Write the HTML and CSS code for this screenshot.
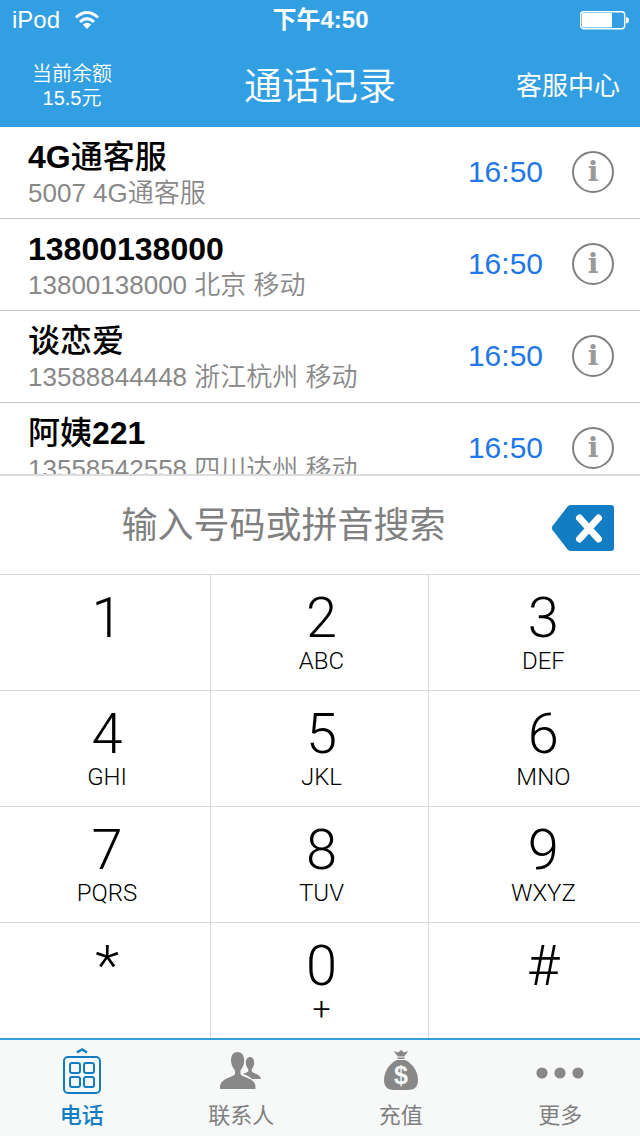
FILE: index.html
```html
<!DOCTYPE html>
<html lang="zh-CN">
<head>
    <meta charset="UTF-8">
    <meta name="viewport" content="width=device-width, initial-scale=1.0">
    <title>通话记录</title>
    <link rel="stylesheet" href="styles.css">
</head>
<body>

    <!-- Status bar -->
    <div class="status-bar">
        <div class="carrier">
            <span>iPod</span>
            <svg width="26" height="20" viewBox="0 0 26 20" fill="none" stroke="#fff" stroke-width="3">
                <path d="M2 7.500Q13 -2.500 24 7.500"/>
                <path d="M6 11.800Q13 5.500 20 11.800"/>
                <path d="M8.800 14.500Q13 11 17.200 14.500L13 19z" fill="#fff" stroke="none"/>
            </svg>
        </div>
        <div class="clock">下午4:50</div>
        <svg class="battery" width="49" height="20" viewBox="0 0 49 20">
            <rect x="0.700" y="1.700" width="44" height="17" rx="3" fill="none" stroke="#fff" stroke-width="1.400"/>
            <rect x="2" y="3" width="30" height="14.500" rx="1" fill="#fff"/>
            <path d="M46 7q3 .500 3 3.200t-3 3.200z" fill="#fff"/>
        </svg>
    </div>

    <!-- Header -->
    <header class="header">
        <div class="balance">当前余额<br>15.5元</div>
        <h1>通话记录</h1>
        <a class="service" href="#service">客服中心</a>
    </header>

    <!-- Call log -->
    <ul class="calls">
        <li class="call">
            <div class="who"><div class="name">4G<span>通客服</span></div><div class="detail">5007 4G通客服</div></div>
            <time>16:50</time>
            <button class="info" aria-label="详情">i</button>
        </li>
        <li class="call">
            <div class="who"><div class="name">13800138000</div><div class="detail">13800138000 北京 移动</div></div>
            <time>16:50</time>
            <button class="info" aria-label="详情">i</button>
        </li>
        <li class="call">
            <div class="who"><div class="name"><span>谈恋爱</span></div><div class="detail">13588844448 浙江杭州 移动</div></div>
            <time>16:50</time>
            <button class="info" aria-label="详情">i</button>
        </li>
        <li class="call">
            <div class="who"><div class="name"><span>阿姨</span>221</div><div class="detail">13558542558 四川达州 移动</div></div>
            <time>16:50</time>
            <button class="info" aria-label="详情">i</button>
        </li>
    </ul>

    <!-- Number input -->
    <div class="search">
        <input type="text" placeholder="输入号码或拼音搜索" aria-label="输入号码或拼音搜索">
        <button class="delete" aria-label="删除">
            <svg width="64" height="48" viewBox="0 0 64 48">
                <path d="M19 1H60Q63 1 63 4V44Q63 47 60 47H19L17 46L1.500 26Q0 24 1.500 22L17 2z" fill="#127dc2"/>
                <path d="M28.500 14L47.500 35M47.500 14L28.500 35" stroke="#fff" stroke-width="7" stroke-linecap="round"/>
            </svg>
        </button>
    </div>

    <!-- Keypad -->
    <div class="keypad">
        <button class="key">1</button>
        <button class="key">2<span>ABC</span></button>
        <button class="key">3<span>DEF</span></button>
        <button class="key">4<span>GHI</span></button>
        <button class="key">5<span>JKL</span></button>
        <button class="key">6<span>MNO</span></button>
        <button class="key">7<span>PQRS</span></button>
        <button class="key">8<span>TUV</span></button>
        <button class="key">9<span>WXYZ</span></button>
        <button class="key">*</button>
        <button class="key">0<span class="plus">+</span></button>
        <button class="key">#</button>
    </div>

    <!-- Tab bar -->
    <nav class="tabs">
        <a class="tab active" href="#phone">
            <svg width="48" height="48" viewBox="0 0 48 48" fill="none" stroke="#127dc2" stroke-width="2">
                <path d="M19 4.500L24 1.500L29 4.500" stroke-width="2.500"/>
                <rect x="6" y="9" width="36" height="36" rx="4"/>
                <rect x="12" y="15" width="10" height="10" rx="2"/>
                <rect x="26" y="15" width="10" height="10" rx="2"/>
                <rect x="12" y="29" width="10" height="10" rx="2"/>
                <rect x="26" y="29" width="10" height="10" rx="2"/>
            </svg>
            电话
        </a>
        <a class="tab" href="#contacts">
            <svg width="48" height="48" viewBox="0 0 48 48" fill="#888">
                <path d="M20.500 4c4 0 6.700 3.500 6.700 8.200 0 4.500-1.700 7.800-3.700 10v4c1 1.500 3.500 2.300 6 3.300 6 2.400 9 5 9 9.500v2H3v-2c0-4.500 3.500-7.300 9-9.500 2.500-1 5-1.800 6-3.300v-4c-2-2.200-4-5.500-4-10C14 7.500 16.500 4 20.500 4z"/>
                <path d="M33 9c2.700 0 4.200 2.600 4.200 5.800 0 2.600-1 4.600-2.400 6.200v2.500c1 1 2.500 1.500 4 2.200 3.400 1.400 5 3 5 5.300H35c-2-2.300-5-3.600-9-5 2-1.200 4.500-1.600 5.300-2.500V21c-1.500-1.600-2.500-3.600-2.500-6.200 0-3.200 1.500-5.800 4.200-5.800z"/>
            </svg>
            联系人
        </a>
        <a class="tab" href="#recharge">
            <svg width="48" height="48" viewBox="0 0 48 48" fill="#888">
                <path d="M16.500 3l4.500 1.500L24 2l3 2.500L31.500 3l-4 5v3h-7V8z"/>
                <path d="M20 9h8" stroke="#f7f9f9"/>
                <path d="M20 12h8C35 15 41 23 41 32c0 7-4 10-10 10H17c-6 0-10-3-10-10 0-9 6-17 13-20z"/>
                <text class="dollar" x="24" y="36" text-anchor="middle">$</text>
            </svg>
            充值
        </a>
        <a class="tab" href="#more">
            <svg width="48" height="48" viewBox="0 0 48 48" fill="#888">
                <circle cx="6" cy="25" r="5.600"/>
                <circle cx="24" cy="25" r="5.600"/>
                <circle cx="42" cy="25" r="5.600"/>
            </svg>
            更多
        </a>
    </nav>

</body>
</html>
```
FILE: styles.css
```css
* { box-sizing: border-box; }
body {
    display: flex;
    flex-direction: column;
    height: 100vh;
    margin: 0;
    background-color: #fff;
    font-family: "Liberation Sans", "Noto Sans CJK SC", sans-serif;
}
button {
    padding: 0;
    border: none;
    background: none;
    color: inherit;
    cursor: pointer;
}
svg { display: block; }
a { text-decoration: none; }

.status-bar {
    display: grid;
    grid-template-columns: 1fr auto 1fr;
    align-items: center;
    height: 40px;
    padding: 0 11px 0 12px;
    background-color: #339fe3;
    color: white;
    font-size: 24px;
    line-height: 40px;
}
.carrier { display: flex; align-items: center; gap: 14px; }
.clock { font-weight: bold; }
.battery { justify-self: end; }

.header {
    display: grid;
    grid-template-columns: 1fr auto 1fr;
    align-items: center;
    height: 87px;
    padding: 4px 20px 0;
    background-color: #339fe3;
    color: white;
}
.balance {
    justify-self: start;
    padding-left: 12px;
    font-size: 20px;
    font-weight: 350;
    line-height: 24px;
    text-align: center;
}
.header h1 { margin: 0; font-size: 38px; font-weight: 350; line-height: 48px; }
.service { justify-self: end; padding-bottom: 4px; color: white; font-size: 26px; }

.calls {
    flex: 1;
    min-height: 0;
    margin: 0;
    padding: 0;
    overflow: hidden;
    list-style: none;
}
.call {
    display: flex;
    align-items: center;
    height: 92px;
    padding: 0 26px 0 28px;
    border-bottom: 1px solid #c8c8c8;
}
.who { flex: 1; padding-top: 4px; white-space: nowrap; }
.name { font-size: 32px; font-weight: bold; line-height: 36px; }
.name span { font-weight: 500; }
.detail { color: #888; font-size: 26px; font-weight: 350; line-height: 36px; }
.call time { padding-bottom: 2px; color: #2077e8; font-size: 30px; }
.info {
    width: 42px;
    height: 42px;
    margin: 0 0 2px 29px;
    border: 2px solid #808080;
    border-radius: 50%;
    color: #999;
    font: bold 28px/38px "DejaVu Serif", serif;
}

.search {
    display: flex;
    align-items: center;
    height: 100px;
    padding: 0 25px 0 16px;
    border-top: 2px solid #ddd;
}
.search input {
    flex: 1;
    min-width: 0;
    padding: 0 0 6px;
    border: none;
    outline: none;
    background: none;
    color: #000;
    font: 400 36px/48px "Noto Sans CJK SC", sans-serif;
    text-align: center;
}
.search input::placeholder { color: #808080; opacity: 1; }
.delete { padding-top: 6px; }

.keypad {
    display: grid;
    grid-template-columns: 33fr 34fr 33fr;
    grid-auto-rows: 116px;
}
.key {
    display: flex;
    flex-direction: column;
    align-items: center;
    padding: 14px 0 0 4px;
    border-top: 1px solid #d8d8d8;
    border-right: 1px solid #d8d8d8;
    color: #000;
    font: 300 56px/58px Roboto, sans-serif;
}
.key:nth-child(3n) { padding-left: 18px; border-right: none; }
.key span { font-size: 24px; line-height: 28px; }
.key .plus { font-size: 32px; }

.tabs {
    display: grid;
    grid-template-columns: repeat(4, 1fr);
    height: 98px;
    padding-left: 2px;
    border-top: 2px solid #339fd8;
    background-color: #f7f9f9;
}
.tab {
    display: flex;
    flex-direction: column;
    align-items: center;
    padding-top: 8px;
    color: #808080;
    font-size: 22px;
    line-height: 40px;
}
.tab.active { color: #127dc2; font-weight: 500; }
.dollar { fill: #f7f9f9; font-size: 25px; font-weight: bold; }
```
